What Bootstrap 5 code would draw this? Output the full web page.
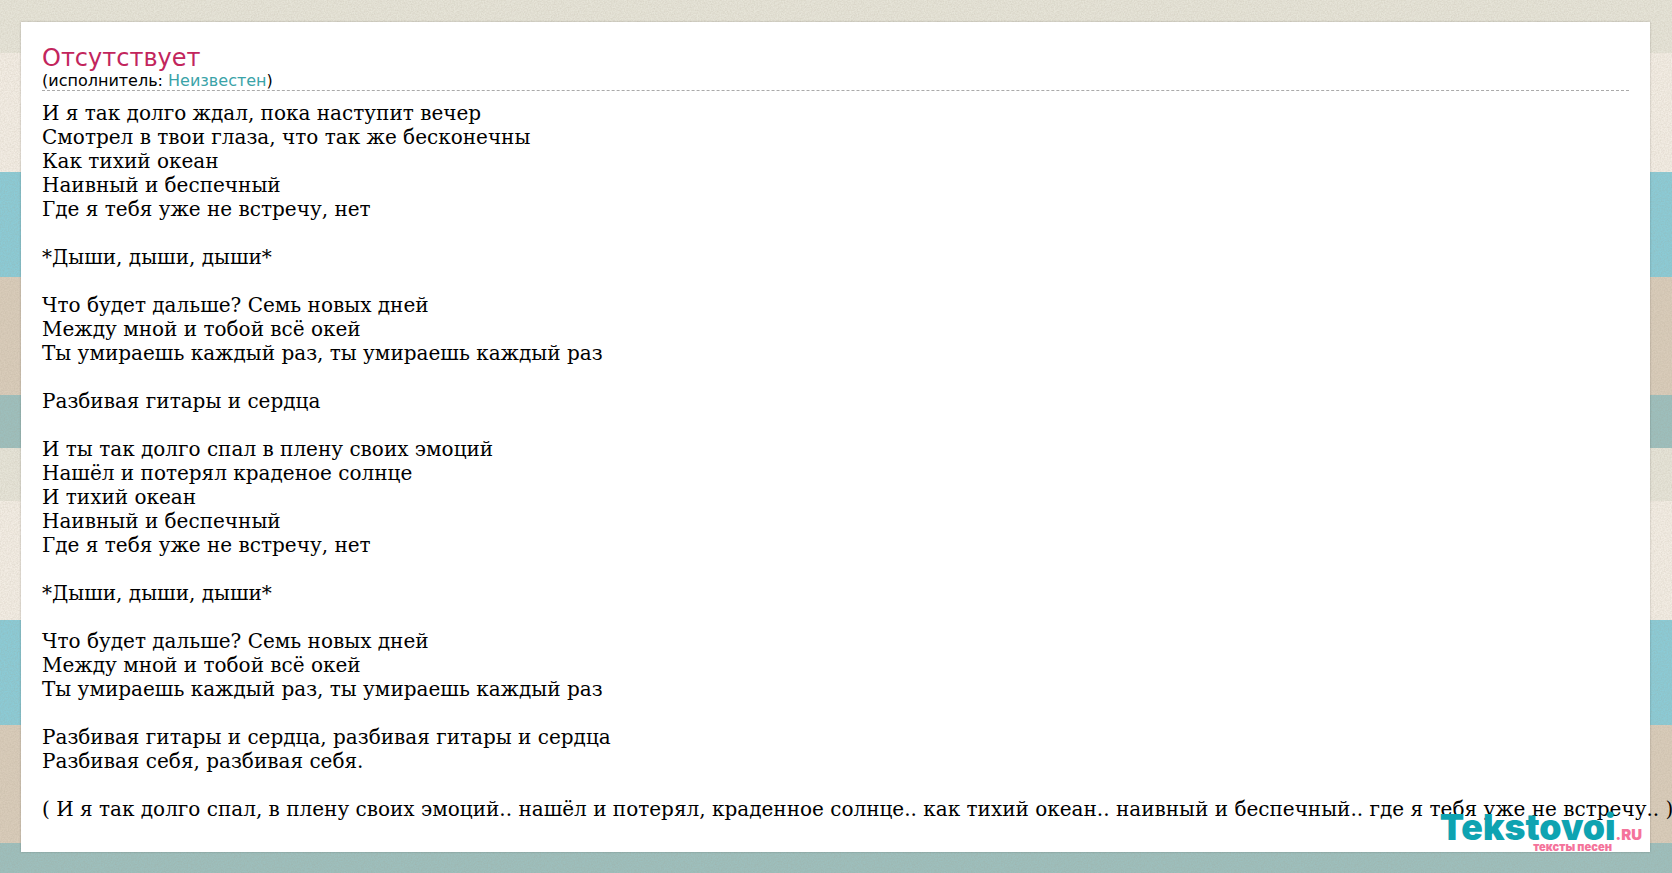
<!DOCTYPE html>
<html lang="ru">
<head>
<meta charset="utf-8">
<title>Отсутствует</title>
<link href="https://cdn.jsdelivr.net/npm/bootstrap@5.3.0/dist/css/bootstrap.min.css" rel="stylesheet">
<style>
html,body{height:100%;}
body{margin:0;overflow:hidden;background-color:#e5e0d5;
background-image:
 url("data:image/svg+xml,%3Csvg xmlns='http://www.w3.org/2000/svg' width='300' height='300'%3E%3Cfilter id='n'%3E%3CfeTurbulence type='fractalNoise' baseFrequency='.7' numOctaves='2' stitchTiles='stitch'/%3E%3CfeColorMatrix values='0 0 0 0 .35 0 0 0 0 .3 0 0 0 0 .22 .35 0 0 0 -.1'/%3E%3C/filter%3E%3Crect width='300' height='300' filter='url(%23n)'/%3E%3C/svg%3E"),
 linear-gradient(#e6e4d8 0 53px,#f3ede4 53px 172px,#8bcbd6 172px 277px,#d9ccba 277px 395px,#9dbfbd 395px 448px);
background-size:300px 300px,100% 448px;}
.sheet{margin:22px 22px 0 21px;height:830px;padding:22px 21px 0;background:#fff;box-shadow:0 0 2px rgba(0,0,0,.25);position:relative;}
.song-title{font-family:"DejaVu Sans",sans-serif;font-size:24px;line-height:28px;color:#c2255c;margin:0;font-weight:400;}
.song-artist{font-family:"DejaVu Sans",sans-serif;font-size:16px;line-height:18px;color:#000;border-bottom:1px dashed #aaa;}
.song-artist a{color:#3aa3a8;text-decoration:none;}
.lyrics{font-family:"DejaVu Serif",serif;font-size:20px;line-height:24px;color:#000;white-space:pre;padding-top:10px;}
.site-logo{position:absolute;right:8px;bottom:0;width:240px;height:37px;text-align:right;}
.site-logo-main{display:block;font-family:Inter,sans-serif;font-weight:900;font-size:35.6px;line-height:26px;color:#0ea3b1;white-space:nowrap;}
.site-logo-main span{font-size:15px;color:#f4739b;}
.site-logo-sub{display:block;font-family:Inter,sans-serif;font-weight:900;font-size:11.2px;line-height:12px;color:#f4739b;padding-right:30px;margin-top:-7px;}
</style>
</head>
<body>
<div class="sheet">
<h1 class="song-title">Отсутствует</h1>
<div class="song-artist">(исполнитель: <a href="#">Неизвестен</a>)</div>
<div class="lyrics">И я так долго ждал, пока наступит вечер
Смотрел в твои глаза, что так же бесконечны
Как тихий океан
Наивный и беспечный
Где я тебя уже не встречу, нет

*Дыши, дыши, дыши*

Что будет дальше? Семь новых дней
Между мной и тобой всё окей
Ты умираешь каждый раз, ты умираешь каждый раз

Разбивая гитары и сердца

И ты так долго спал в плену своих эмоций
Нашёл и потерял краденое солнце
И тихий океан
Наивный и беспечный
Где я тебя уже не встречу, нет

*Дыши, дыши, дыши*

Что будет дальше? Семь новых дней
Между мной и тобой всё окей
Ты умираешь каждый раз, ты умираешь каждый раз

Разбивая гитары и сердца, разбивая гитары и сердца
Разбивая себя, разбивая себя.

( И я так долго спал, в плену своих эмоций.. нашёл и потерял, краденное солнце.. как тихий океан.. наивный и беспечный.. где я тебя уже не встречу.. )</div>
<div class="site-logo"><span class="site-logo-main">Tekstovoi<span>.RU</span></span><span class="site-logo-sub">тексты песен</span></div>
</div>
<script src="https://cdn.jsdelivr.net/npm/bootstrap@5.3.0/dist/js/bootstrap.bundle.min.js"></script>
</body>
</html>
